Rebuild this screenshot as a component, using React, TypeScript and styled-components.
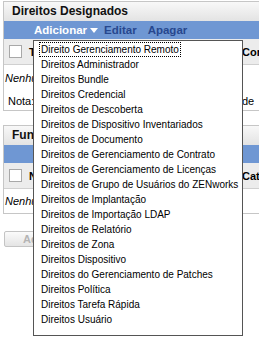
import styled, { createGlobalStyle } from 'styled-components';

const GlobalStyle = createGlobalStyle`
  html, body {
    margin: 0;
    padding: 0;
    background: #fff;
    overflow: hidden;
  }
  body {
    width: 259px;
    height: 343px;
    font-family: "Liberation Sans", Arial, sans-serif;
    color: #000;
  }
`;

const menuItems = [
  'Direito Gerenciamento Remoto',
  'Direitos Administrador',
  'Direitos Bundle',
  'Direitos Credencial',
  'Direitos de Descoberta',
  'Direitos de Dispositivo Inventariados',
  'Direitos de Documento',
  'Direitos de Gerenciamento de Contrato',
  'Direitos de Gerenciamento de Licenças',
  'Direitos de Grupo de Usuários do ZENworks',
  'Direitos de Implantação',
  'Direitos de Importação LDAP',
  'Direitos de Relatório',
  'Direitos de Zona',
  'Direitos Dispositivo',
  'Direitos do Gerenciamento de Patches',
  'Direitos Política',
  'Direitos Tarefa Rápida',
  'Direitos Usuário',
];

const Page = styled.div`
  width: 340px;
  padding: 1px 0 0 3px;
`;

const Panel = styled.section<{ $spacing: number }>`
  border: 1px solid #c6c6c6;
  margin-bottom: ${(p) => p.$spacing}px;
`;

const PanelTitle = styled.h2`
  margin: 0;
  height: 19px;
  line-height: 19px;
  padding-left: 8px;
  font-size: 12px;
  font-weight: bold;
  color: #111;
  background: linear-gradient(#f8f8f8, #e3e3e3);
`;

const Toolbar = styled.div`
  display: flex;
  align-items: center;
  height: 18px;
  padding-left: 30px;
  background: #6f97d3;
`;

const Action = styled.div<{ $disabled?: boolean }>`
  position: relative;
  display: flex;
  align-items: center;
  height: 100%;
  margin-right: ${(p) => (p.$disabled ? 11 : 6)}px;
  font-size: 11.5px;
  font-weight: bold;
  color: ${(p) => (p.$disabled ? '#27478e' : '#fff')};
  cursor: default;
`;

const Caret = styled.svg`
  margin-left: 3px;
`;

const Menu = styled.ul`
  position: absolute;
  top: calc(100% + 1px);
  left: -1px;
  z-index: 10;
  width: 208px;
  margin: 0;
  padding: 1px 0 8px;
  list-style: none;
  background: #fff;
  border: 1px solid #555;
`;

const MenuItem = styled.li`
  display: flex;
  align-items: center;
  height: 15px;
  padding-left: 5px;
  font-size: 10px;
  font-weight: normal;
  color: #000;
  white-space: nowrap;
`;

const MenuLabel = styled.span<{ $focused?: boolean }>`
  padding: 0 1px;
  line-height: 13px;
  border: 1px dotted ${(p) => (p.$focused ? '#000' : 'transparent')};
`;

const HeadRow = styled.div`
  display: grid;
  grid-template-columns: 25px 213px 1fr;
  align-items: center;
  height: 25px;
  background: #ececec;
  border-bottom: 1px solid #d0d0d0;
`;

const CheckBox = styled.span`
  display: block;
  box-sizing: border-box;
  width: 13px;
  height: 13px;
  margin-left: 5px;
  background: #fff;
  border: 1px solid #a8a8a8;
`;

const HeadLabel = styled.span`
  font-size: 11px;
  font-weight: bold;
  white-space: nowrap;
`;

const EmptyRow = styled.div<{ $height: number }>`
  display: flex;
  align-items: center;
  height: ${(p) => p.$height}px;
  padding-left: 1px;
  font-size: 11px;
  font-style: italic;
  white-space: nowrap;
`;

const NoteRow = styled.div`
  display: grid;
  grid-template-columns: 238px 1fr;
  align-items: center;
  height: 19px;
  font-size: 11px;
  white-space: nowrap;
`;

const NoteText = styled.span`
  padding-left: 4px;
  overflow: hidden;
`;

const Button = styled.button`
  display: block;
  height: 16px;
  margin-left: 1px;
  padding: 0 18px;
  font-family: inherit;
  font-size: 11px;
  font-weight: bold;
  color: #b4b4b4;
  background: linear-gradient(#fbfbfb, #e4e4e4);
  border: 1px solid #c4c4c4;
  border-radius: 2px;
`;

function App() {
  return (
    <Page>
      <GlobalStyle />
      <Panel $spacing={14}>
        <PanelTitle>Direitos Designados</PanelTitle>
        <Toolbar>
          <Action>
            Adicionar
            <Caret width="8" height="5" viewBox="0 0 8 5">
              <path d="M0 0h8L4 5z" fill="#fff" />
            </Caret>
            <Menu>
              {menuItems.map((item, index) => (
                <MenuItem key={item}>
                  <MenuLabel $focused={index === 0}>{item}</MenuLabel>
                </MenuItem>
              ))}
            </Menu>
          </Action>
          <Action $disabled>Editar</Action>
          <Action $disabled>Apagar</Action>
        </Toolbar>
        <HeadRow>
          <CheckBox />
          <HeadLabel>Tipo</HeadLabel>
          <HeadLabel>Com</HeadLabel>
        </HeadRow>
        <EmptyRow $height={26}>Nenhum item disponível</EmptyRow>
        <NoteRow>
          <NoteText>Nota: os direitos atribuídos dependem do tipo</NoteText>
          <span>de</span>
        </NoteRow>
      </Panel>
      <Panel $spacing={17}>
        <PanelTitle>Funções Designadas</PanelTitle>
        <Toolbar>
          <Action>Adicionar</Action>
          <Action $disabled>Apagar</Action>
        </Toolbar>
        <HeadRow>
          <CheckBox />
          <HeadLabel>Nome</HeadLabel>
          <HeadLabel>Categoria</HeadLabel>
        </HeadRow>
        <EmptyRow $height={24}>Nenhum item disponível</EmptyRow>
      </Panel>
      <Button>Adicionar</Button>
    </Page>
  );
}

export default App;
